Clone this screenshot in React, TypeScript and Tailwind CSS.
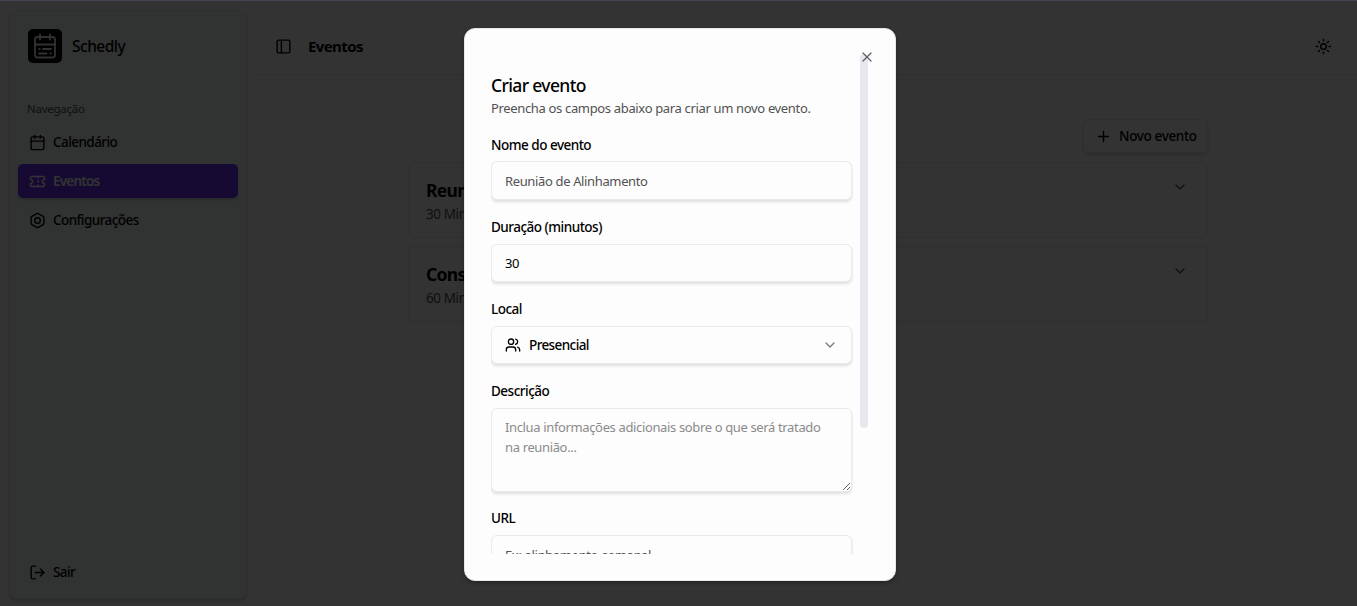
import React from "react";
import { Calendar, ChevronDown, LogOut, PanelLeft, Plus, Sun, Users, X } from "lucide-react";

const control =
  "block w-full rounded-[6px] border border-[#ebebeb] bg-[#fdfdfd] px-[13px] text-[13px] tracking-[-0.36px] shadow-[0_2px_3px_0_rgba(0,0,0,0.12)] outline-none";

function Logo() {
  return (
    <div className="flex size-[34px] items-center justify-center rounded-[5px] bg-black">
      <svg width="24" height="26" viewBox="0 0 24 26" fill="none" stroke="#f5f5f5" strokeWidth="1.8" strokeLinecap="round" strokeLinejoin="round">
        <rect x="2" y="4" width="20" height="20.5" rx="2.5" />
        <path d="M7 1.5v5M17 1.5v5M2 11.5h20" />
        <path d="M6.3 16h.4M10 16h8M6 20.5h7.5M17.3 20.5h.4" />
      </svg>
    </div>
  );
}

function HexNut() {
  return (
    <svg width="17" height="17" viewBox="0 0 24 24" fill="none" stroke="currentColor" strokeWidth="2" strokeLinecap="round" strokeLinejoin="round">
      <path d="M21 16V8a2 2 0 0 0-1-1.73l-7-4a2 2 0 0 0-2 0l-7 4A2 2 0 0 0 3 8v8a2 2 0 0 0 1 1.73l7 4a2 2 0 0 0 2 0l7-4A2 2 0 0 0 21 16z" />
      <circle cx="12" cy="12" r="4" />
    </svg>
  );
}

function TicketIcon() {
  return (
    <svg width="17" height="17" viewBox="0 0 24 24" fill="none" stroke="currentColor" strokeWidth="2" strokeLinecap="round" strokeLinejoin="round">
      <path d="M2 9a3 3 0 0 1 0 6v2a2 2 0 0 0 2 2h16a2 2 0 0 0 2-2v-2a3 3 0 0 1 0-6V7a2 2 0 0 0-2-2H4a2 2 0 0 0-2 2Z" />
      <path d="M13 5v2M13 17v2M13 11v2" />
    </svg>
  );
}

function NavItem({ icon, label, active = false }: { icon: React.ReactNode; label: string; active?: boolean }) {
  return (
    <div
      className={
        active
          ? "flex h-[34px] items-center gap-[7px] rounded-[5px] bg-[#7033ff] px-[11px] text-[13.5px] font-semibold tracking-[-0.8px] text-white shadow-[0_2px_3px_0_rgba(0,0,0,0.16)]"
          : "flex h-[34px] items-center gap-[7px] px-[11px] text-[13.5px] font-medium tracking-[-0.56px] text-black"
      }
    >
      {icon}
      <span>{label}</span>
    </div>
  );
}

function Sidebar() {
  return (
    <aside className="flex w-[256px] shrink-0 pt-[10px] pr-[9px] pb-[7px] pl-[9px]">
      <div className="flex flex-1 flex-col rounded-[8px] border border-[#e9ecea] bg-[#f1fcf5] px-[8px] shadow-[0_2px_3px_0_rgba(0,0,0,0.16)]">
        <div className="mt-[18px] flex items-center gap-[10px] pl-[10px]">
          <Logo />
          <span className="mt-[1px] text-[15.5px] font-medium tracking-[-0.5px]">Schedly</span>
        </div>
        <div className="mt-[36px] mb-[6px] h-[20px] pl-[9px] text-[11.5px] leading-[20px] tracking-[-0.25px] text-[#525252]">Navegação</div>
        <nav className="flex flex-col gap-[5px]">
          <NavItem icon={<Calendar size={17} />} label="Calendário" />
          <NavItem icon={<TicketIcon />} label="Eventos" active />
          <NavItem icon={<HexNut />} label="Configurações" />
        </nav>
        <div className="mt-auto mb-[9px]">
          <NavItem icon={<LogOut size={17} />} label="Sair" />
        </div>
      </div>
    </aside>
  );
}

function EventCard({ title, duration }: { title: string; duration: string }) {
  return (
    <div className="flex h-[76px] justify-between rounded-[6px] border border-[#ebebeb] pt-[14px] pr-[19px] pl-[17px]">
      <div>
        <div className="h-[26px] text-[17.5px] leading-[26px] font-bold tracking-[-0.7px]">{title}</div>
        <div className="text-[13.5px] leading-[22px] tracking-[-0.4px] text-[#525252]">{duration}</div>
      </div>
      <ChevronDown size={16} className="mt-[2px] text-[#525252]" />
    </div>
  );
}

function Label({ children, className = "mb-[7px]" }: { children: React.ReactNode; className?: string }) {
  return <div className={`${className} h-[20px] text-[13.5px] leading-[20px] font-medium tracking-[-0.5px]`}>{children}</div>;
}

function EventDialog() {
  return (
    <div className="relative h-[553px] w-[432px] rounded-[11px] border border-[#e7e7ee] bg-[#fdfdfd] px-[26px] pt-[25px] shadow-[0_2px_4px_rgba(0,0,0,0.3)]">
      <div className="flex h-[500px] overflow-hidden">
        <div className="h-full w-[361px] shrink-0">
          <h2 className="mt-[21px] h-[20px] text-[17.5px] leading-[20px] font-medium tracking-[-0.65px]">Criar evento</h2>
          <p className="mt-[3px] mb-[17px] h-[20px] text-[13px] leading-[20px] tracking-[-0.34px] whitespace-nowrap text-[#525252]">
            Preencha os campos abaixo para criar um novo evento.
          </p>
          <Label className="mb-[6px]">Nome do evento</Label>
          <input className={`${control} mb-[17px] h-[39px] placeholder:text-[#525252]`} placeholder="Reunião de Alinhamento" />
          <Label>Duração (minutos)</Label>
          <input className={`${control} mb-[17px] h-[38px]`} defaultValue="30" />
          <Label>Local</Label>
          <div className={`${control} mb-[17px] h-[38px]`}>
            <div className="flex h-full items-center">
              <Users size={16} strokeWidth={2} />
              <span className="ml-[8px] text-[13.5px] font-medium tracking-[-0.6px]">Presencial</span>
              <ChevronDown size={16} className="ml-auto text-[#7a7a7a]" />
            </div>
          </div>
          <Label>Descrição</Label>
          <textarea
            className={`${control} mb-[16px] h-[84px] resize py-[8px] leading-[20px] placeholder:text-[#8b8b8b]`}
            placeholder="Inclua informações adicionais sobre o que será tratado na reunião..."
          />
          <Label>URL</Label>
          <input className={`${control} h-[39px] placeholder:text-[#525252]`} placeholder="Ex: alinhamento-semanal" />
        </div>
        <div className="ml-[8px] h-[374px] w-[8px] rounded-full bg-[#e7e7ee]" />
      </div>
      <X size={16} strokeWidth={1.8} className="absolute top-[20px] right-[20px] text-[#5c5e63]" />
    </div>
  );
}

export default function App() {
  return (
    <div className="relative flex h-[606px] w-[1357px] overflow-hidden bg-[#fdfdfd] font-['Noto_Sans','Open_Sans',sans-serif] text-black">
      <Sidebar />
      <main className="flex flex-1 flex-col">
        <header className="flex h-[75px] items-center border-b border-[#ebebeb] pt-[18px] pr-[25px] pl-[19px]">
          <PanelLeft size={17} />
          <h1 className="mt-[1px] ml-[16px] text-[15px] font-bold tracking-[-0.6px]">Eventos</h1>
          <Sun size={17} className="ml-auto" />
        </header>
        <section className="ml-[152px] w-[800px] pt-[44px]">
          <div className="mb-[9px] flex justify-end">
            <button className="flex h-[34px] w-[125px] items-center gap-[7px] rounded-[6px] border border-[#ebebeb] pl-[11px] text-[13.5px] font-medium tracking-[-0.35px] whitespace-nowrap shadow-[0_2px_3px_0_rgba(0,0,0,0.16)]">
              <Plus size={17} />
              Novo evento
            </button>
          </div>
          <div className="flex flex-col gap-[8px]">
            <EventCard title="Reunião" duration="30 Minutos" />
            <EventCard title="Consulta" duration="60 Minutos" />
          </div>
        </section>
      </main>
      <div className="absolute inset-0 flex items-start justify-center border-t border-[#414650] bg-black/80 pt-[27px] pl-[3px]">
        <EventDialog />
      </div>
    </div>
  );
}
